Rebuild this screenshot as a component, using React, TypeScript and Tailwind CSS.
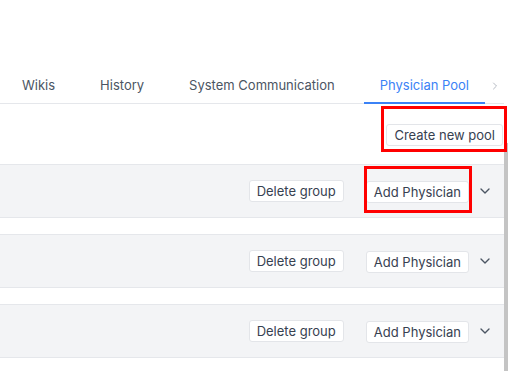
import { ChevronDown, ChevronRight } from "lucide-react";

const TABS = ["Wikis", "History", "System Communication", "Physician Pool"];
const ACTIVE = "Physician Pool";

function Btn({ label }: { label: string }) {
  return (
    <button className="h-[22px] whitespace-nowrap rounded-[3px] border border-[#e3e5e9] bg-white px-[7px] text-[13px] leading-none text-[#374151]">
      {label}
    </button>
  );
}

function GroupRow({ highlight }: { highlight?: boolean }) {
  return (
    <div className="flex h-[54px] items-center justify-end border-y border-[#e5e7eb] bg-[#f3f4f6] pr-[11px]">
      <Btn label="Delete group" />
      <div className="relative ml-[22px]">
        <Btn label="Add Physician" />
        {highlight && (
          <span className="absolute -top-[13px] -right-[3px] -bottom-[10px] -left-[2px] border-[3px] border-[#ff0000]" />
        )}
      </div>
      <ChevronDown className="ml-[8px] size-[16px] text-[#4b5563]" strokeWidth={2} />
    </div>
  );
}

export default function App() {
  return (
    <div
      className="flex h-[371px] w-[508px] overflow-hidden bg-white"
      style={{ fontFamily: "Inter, 'Noto Sans', sans-serif" }}
    >
      <div className="flex w-[504px] shrink-0 flex-col pt-[69px]">
        {/* Tabs */}
        <div className="flex h-[35px] items-stretch border-b border-[#e5e7eb] pl-[6px]">
          {TABS.map((t, i) => (
            <div
              key={t}
              className={
                "-mb-px flex shrink-0 items-center whitespace-nowrap border-b-2 px-[16px] text-[13px] " +
                (i > 0 ? "ml-[13px] " : "") +
                (t === ACTIVE
                  ? "border-[#3b82f6] text-[#3b82f6]"
                  : "border-transparent text-[#4b5563]")
              }
            >
              {t}
            </div>
          ))}
          <div className="ml-[4px] flex shrink-0 items-center text-[#9ca3af]">
            <ChevronRight className="size-[12px]" strokeWidth={1.5} />
          </div>
        </div>

        {/* Header actions */}
        <div className="flex h-[60px] items-center justify-end pr-[1px]">
          <div className="relative">
            <Btn label="Create new pool" />
            <span className="absolute -top-[16px] -right-[4px] -bottom-[6px] -left-[5px] border-[3px] border-[#ff0000]" />
          </div>
        </div>

        {/* Groups */}
        <div className="flex flex-col gap-[16px]">
          <GroupRow highlight />
          <GroupRow />
          <GroupRow />
        </div>
      </div>

      {/* Scrollbar */}
      <div className="mt-[143px] w-[4px] shrink-0 bg-[#c4c4c4]" />
    </div>
  );
}
